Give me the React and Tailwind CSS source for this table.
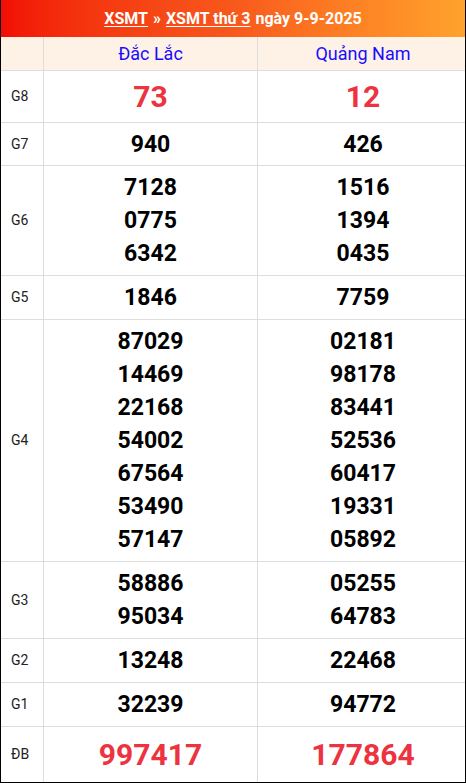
import React from "react";

const rows = [
  { label: "G8", h: "h-[52px]", a: ["73"], b: ["12"], big: true },
  { label: "G7", h: "h-[43px]", a: ["940"], b: ["426"] },
  { label: "G6", h: "h-[110px]", a: ["7128", "0775", "6342"], b: ["1516", "1394", "0435"] },
  { label: "G5", h: "h-[44px]", a: ["1846"], b: ["7759"] },
  {
    label: "G4",
    h: "h-[242px]",
    a: ["87029", "14469", "22168", "54002", "67564", "53490", "57147"],
    b: ["02181", "98178", "83441", "52536", "60417", "19331", "05892"],
  },
  { label: "G3", h: "h-[77px]", a: ["58886", "95034"], b: ["05255", "64783"] },
  { label: "G2", h: "h-[44px]", a: ["13248"], b: ["22468"] },
  { label: "G1", h: "h-[44px]", a: ["32239"], b: ["94772"] },
  { label: "ĐB", h: "h-[55px]", a: ["997417"], b: ["177864"], big: true, last: true },
];

function Cell({ nums, big, className }) {
  return (
    <div className={`flex flex-col items-center justify-center ${className}`}>
      {nums.map((n, i) =>
        big ? (
          <div key={i} className="text-[30px] font-bold leading-[40px] text-[#ed3340]">
            {n}
          </div>
        ) : (
          <div key={i} className="text-[23px] font-bold leading-[33px] text-black">
            {n}
          </div>
        )
      )}
    </div>
  );
}

export default function App() {
  return (
    <div
      className="w-[466px] h-[783px] border-x border-b border-black bg-white"
      style={{ fontFamily: "Roboto, 'Noto Sans', Arial, sans-serif" }}
    >
      <div className="h-[37px] flex items-center justify-center bg-gradient-to-r from-[#f20c05] via-[#f8581c] to-[#ffa22c] text-white text-[16px] font-bold">
        <span className="underline underline-offset-2">XSMT</span>
        <span className="mx-[5px]">»</span>
        <span className="underline underline-offset-2">XSMT thứ 3</span>
        <span className="ml-[5px]">ngày 9-9-2025</span>
      </div>
      <div className="flex h-[34px] bg-[#fef2e7] border-b border-[#dddddd]">
        <div className="w-[43px] border-r border-[#dddddd]" />
        <div className="w-[214px] border-r border-[#dddddd] flex items-center justify-center text-[18px] text-[#1a0dff]">
          Đắc Lắc
        </div>
        <div className="flex-1 flex items-center justify-center pl-[3px] text-[18px] text-[#1a0dff]">
          Quảng Nam
        </div>
      </div>
      {rows.map((r) => (
        <div
          key={r.label}
          className={`flex ${r.h} ${r.last ? "" : "border-b border-[#dddddd]"}`}
        >
          <div className="w-[43px] border-r border-[#dddddd] flex items-center pl-[10px] text-[14px] text-[#222222]">
            {r.label}
          </div>
          <Cell nums={r.a} big={r.big} className="w-[214px] border-r border-[#dddddd]" />
          <Cell nums={r.b} big={r.big} className="flex-1 pl-[3px]" />
        </div>
      ))}
    </div>
  );
}
